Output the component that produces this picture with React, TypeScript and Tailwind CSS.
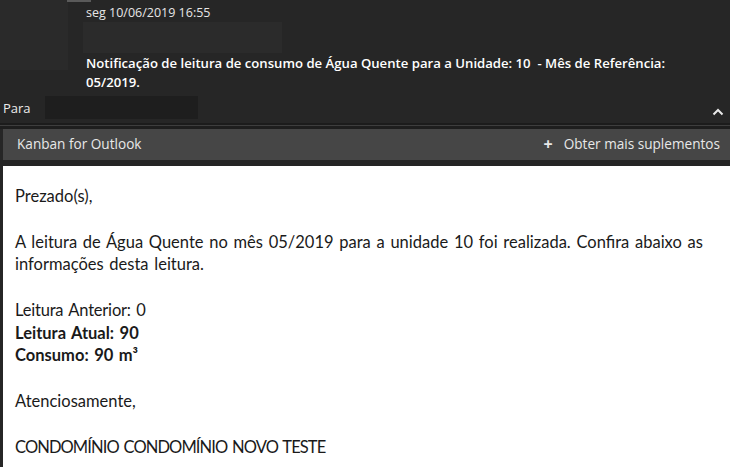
import React from 'react';

const segoe = { fontFamily: '"Open Sans", "Noto Sans", sans-serif' };

function ChevronUp() {
  return (
    <svg width="12" height="8" viewBox="0 0 12 8" fill="none">
      <path d="M1.5 6.5 L6 2 L10.5 6.5" stroke="#e8e8e8" strokeWidth="2" />
    </svg>
  );
}

export default function App() {
  return (
    <div className="w-[730px] h-[467px] overflow-hidden bg-[#262626] flex flex-col">
      {/* Header: sender, date, subject */}
      <div className="relative flex h-[92px]">
        <div className="w-[68px] h-[70px] bg-[#2a2a2a]" />
        <div className="absolute left-[67px] top-0 w-[24px] h-[2px] bg-[#5a5a5a]" />
        <div className="flex flex-col pl-[15px] pt-[5px]">
          <span className="font-['Open_Sans'] text-[12.5px] leading-[16px] text-[#e6e6e6] pl-[3px]">seg 10/06/2019 16:55</span>
          <div className="mt-[1px] w-[199px] h-[32px] bg-[#2b2b2b]" />
          <p className="font-['Open_Sans'] font-semibold text-[13.15px] leading-[19px] text-white pl-[3px] mt-[1px] w-[600px]">
            Notificação de leitura de consumo de Água Quente para a Unidade: 10&nbsp; - Mês de Referência: 05/2019.
          </p>
        </div>
      </div>

      {/* Para */}
      <div className="flex items-center h-[31px] pr-[6px]">
        <span className="font-['Open_Sans'] text-[13px] text-[#ececec] pl-[3px] w-[45px] mt-[2px]">Para</span>
        <div className="w-[153px] h-[23px] bg-[#1e1e1e]" />
        <div className="ml-auto mt-[8px]">
          <ChevronUp />
        </div>
      </div>

      {/* Separator */}
      <div className="h-[2px] bg-[#1c1c1c]" />
      <div className="h-[1px] bg-[#3e3e3e]" />
      <div className="h-[3px] bg-[#1e1e1e]" />

      {/* Add-in bar */}
      <div className="ml-[3px] h-[31px] bg-[#464646] flex items-center justify-between pl-[14px] pr-[10px]" style={segoe}>
        <span className="text-[13.6px] text-[#e8e8e8]">Kanban for Outlook</span>
        <span className="text-[13.6px] text-[#e8e8e8] flex items-center gap-[11px]">
          <span className="text-[16px] font-bold leading-none">+</span>
          Obter mais suplementos
        </span>
      </div>
      <div className="h-[6px] bg-[#252525]" />

      {/* Body */}
      <div className="ml-[3px] flex-1 bg-white pl-[12px] pr-[20px] pt-[19px] font-['Lato'] text-[16.5px] leading-[22.75px] [word-spacing:1.5px] text-[#1a1a1a]">
        <p>Prezado(s),</p>
        <p className="mt-[22.75px]">
          A leitura de Água Quente no mês 05/2019 para a unidade 10 foi realizada. Confira abaixo as informações desta leitura.
        </p>
        <p className="mt-[22.75px] tracking-[-0.2px]">Leitura Anterior: 0</p>
        <p className="font-bold">Leitura Atual: 90</p>
        <p className="font-bold">Consumo: 90 m³</p>
        <p className="mt-[22.75px]">Atenciosamente,</p>
        <p className="mt-[23.5px] tracking-[-0.9px]">CONDOMÍNIO CONDOMÍNIO NOVO TESTE</p>
      </div>
    </div>
  );
}
